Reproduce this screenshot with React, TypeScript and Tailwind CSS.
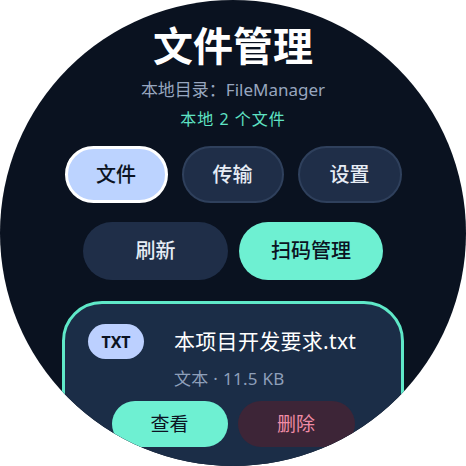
import React from "react";

export default function App() {
  const font = { fontFamily: '"Noto Sans", "Noto Sans CJK SC", sans-serif' };
  return (
    <div className="w-[466px] h-[466px] bg-white" style={font}>
      <div className="w-[466px] h-[466px] rounded-full bg-[#0a1220] overflow-hidden flex flex-col items-center">
        <div className="shrink-0 mt-[22px] text-[40px] leading-[48px] font-bold text-white">文件管理</div>
        <div className="shrink-0 mt-[9px] text-[17px] leading-[22px] text-[#97a6bf]">本地目录：FileManager</div>
        <div className="shrink-0 mt-[7px] text-[16px] leading-[22px] text-[#5fe3c4] tracking-[1px]">本地 2 个文件</div>
        <div className="shrink-0 mt-[16px] flex gap-[14px]">
          <button className="w-[103px] h-[57px] rounded-full bg-[#bcd3ff] border-[3px] border-white text-[20px] font-medium text-[#0b1322]">文件</button>
          <button className="w-[102px] h-[57px] rounded-full bg-[#1f2e48] border-2 border-[#2f405c] text-[20px] font-medium text-[#e6ecf5]">传输</button>
          <button className="w-[104px] h-[57px] rounded-full bg-[#1f2e48] border-2 border-[#2f405c] text-[20px] font-medium text-[#e6ecf5]">设置</button>
        </div>
        <div className="shrink-0 mt-[19px] flex gap-[11px]">
          <button className="w-[145px] h-[58px] rounded-full bg-[#1f2e48] text-[20px] font-medium text-[#e6ecf5]">刷新</button>
          <button className="w-[144px] h-[58px] rounded-full bg-[#6ef0d2] text-[20px] font-medium text-[#0b1322]">扫码管理</button>
        </div>
        <div className="mt-[21px] w-[342px] h-[200px] shrink-0 rounded-[40px] border-[3px] border-[#5fe8c8] bg-[#1b2d47] flex flex-col">
          <div className="flex items-start pl-[23px] pt-[20px]">
            <div className="w-[56px] h-[35px] rounded-full bg-[#bcd0ff] flex items-center justify-center text-[16px] font-bold text-[#0b1322]">TXT</div>
            <div className="ml-[30px] flex flex-col">
              <div className="text-[21px] leading-[32px] text-white mt-[1px] tracking-[0.3px]">本项目开发要求.txt</div>
              <div className="mt-[10px] text-[17px] leading-[24px] text-[#8e9fba] tracking-[0.3px]">文本 · 11.5 KB</div>
            </div>
          </div>
          <div className="mt-[10px] flex justify-center gap-[10px]">
            <button className="w-[116px] h-[46px] rounded-full bg-[#6ef0d2] text-[19px] text-[#0b1322]">查看</button>
            <button className="w-[117px] h-[46px] rounded-full bg-[#3d2537] text-[19px] text-[#f08ca6]">删除</button>
          </div>
        </div>
      </div>
    </div>
  );
}
